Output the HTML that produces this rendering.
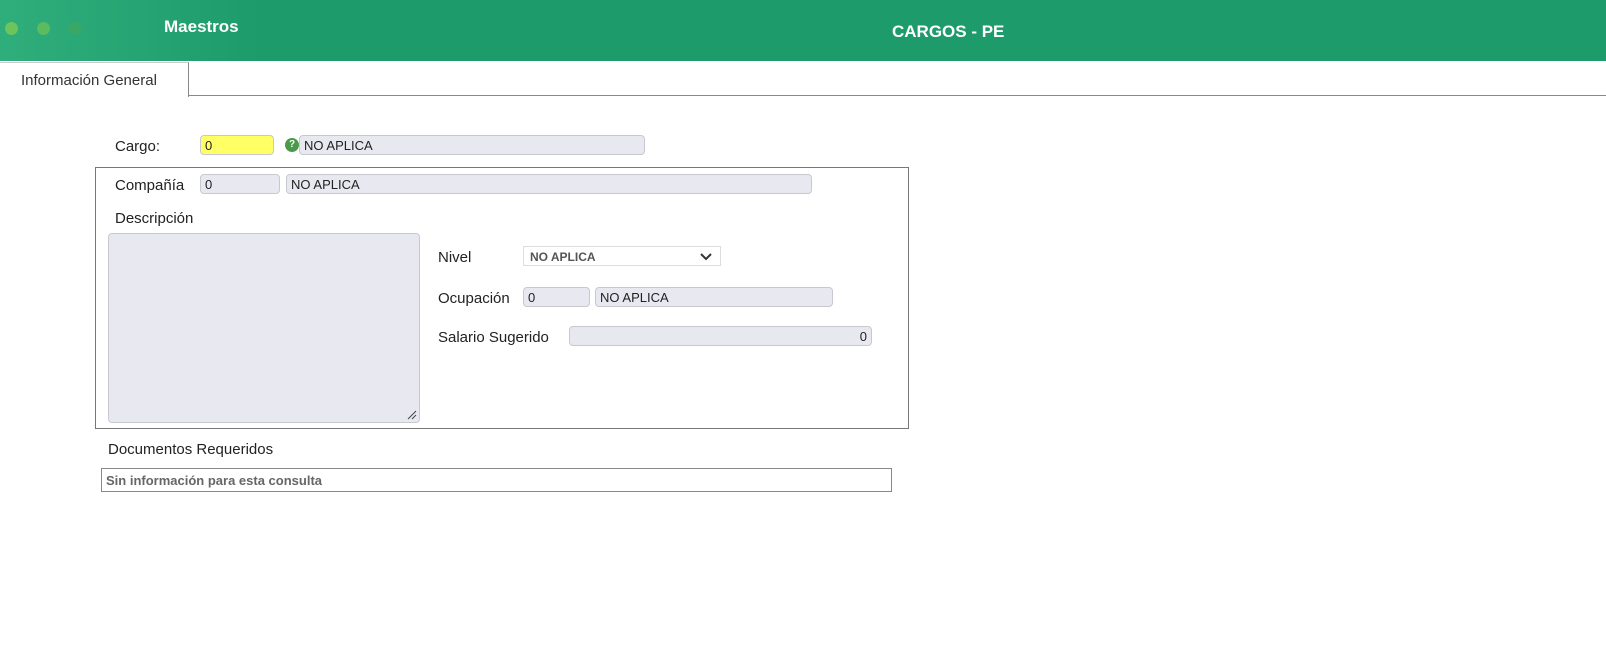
<!DOCTYPE html>
<html><head><style>
*{box-sizing:border-box}
body{margin:0;width:1606px;height:646px;background:#fff;font-family:"Liberation Sans",Arial,sans-serif;position:relative;overflow:hidden}
.a{position:absolute}
.hdr{left:0;top:0;width:1606px;height:61px;background:#1e9b6b}
.glow{left:0;top:0;width:260px;height:61px;background:linear-gradient(90deg,#2fae7c,#1e9b6b)}
.dot{width:13px;height:13px;border-radius:50%;top:22px}
.lbl{font-size:15px;color:#222}
.inp{background:#e8e8f0;border:1px solid #c8c8d0;border-radius:4px;height:20px;font-size:13px;color:#222;padding:2px 4px;line-height:15px}
</style></head><body>
<div class="a hdr"></div>
<div class="a glow"></div>
<div class="a dot" style="left:5px;background:#6cc45a"></div>
<div class="a dot" style="left:37px;background:#5cbb5e"></div>
<div class="a dot" style="left:68px;background:#3aa865"></div>
<div class="a" style="left:164px;top:17px;color:#fff;font-weight:bold;font-size:17px">Maestros</div>
<div class="a" style="left:892px;top:22px;color:#fff;font-weight:bold;font-size:17px">CARGOS - PE</div>
<div class="a" style="left:0;top:95px;width:1606px;height:1px;background:#888"></div>
<div class="a" style="left:0;top:62px;width:189px;height:35px;background:#fff;border-right:1px solid #888;border-top:1px solid #ccc"></div>
<div class="a" style="left:21px;top:72px;font-size:15px;color:#333">Información General</div>

<div class="a lbl" style="left:115px;top:138px">Cargo:</div>
<div class="a inp" style="left:200px;top:135px;width:74px;background:#ffff66">0</div>
<div class="a" style="left:285px;top:138px;width:14px;height:14px;border-radius:50%;background:#4a9a4a;color:#fff;font-size:10px;font-weight:bold;text-align:center;line-height:14px">?</div>
<div class="a inp" style="left:299px;top:135px;width:346px">NO APLICA</div>

<div class="a" style="left:95px;top:167px;width:814px;height:262px;border:1px solid #777"></div>
<div class="a lbl" style="left:115px;top:177px">Compañía</div>
<div class="a inp" style="left:200px;top:174px;width:80px">0</div>
<div class="a inp" style="left:286px;top:174px;width:526px">NO APLICA</div>
<div class="a lbl" style="left:115px;top:210px">Descripción</div>
<div class="a" style="left:108px;top:233px;width:312px;height:190px;background:#e8e8f0;border:1px solid #c8c8d0;border-radius:4px"><svg class="a" style="right:2px;bottom:2px" width="10" height="10"><path d="M1 9 L9 1 M5 9 L9 5" stroke="#444" stroke-width="1"/></svg></div>
<div class="a lbl" style="left:438px;top:249px">Nivel</div>
<div class="a" style="left:523px;top:246px;width:198px;height:20px;border:1px solid #ddd;font-size:12px;font-weight:bold;color:#555;padding:3px 6px">NO APLICA<svg class="a" style="right:8px;top:6px" width="12" height="8"><path d="M1 1 L6 6 L11 1" stroke="#333" stroke-width="2" fill="none"/></svg></div>
<div class="a lbl" style="left:438px;top:290px">Ocupación</div>
<div class="a inp" style="left:523px;top:287px;width:67px">0</div>
<div class="a inp" style="left:595px;top:287px;width:238px">NO APLICA</div>
<div class="a lbl" style="left:438px;top:329px">Salario Sugerido</div>
<div class="a inp" style="left:569px;top:326px;width:303px;text-align:right">0</div>

<div class="a lbl" style="left:108px;top:441px">Documentos Requeridos</div>
<div class="a" style="left:101px;top:468px;width:791px;height:24px;border:1px solid #888;font-size:13px;font-weight:bold;color:#666;padding:4px 4px">Sin información para esta consulta</div>
</body></html>
